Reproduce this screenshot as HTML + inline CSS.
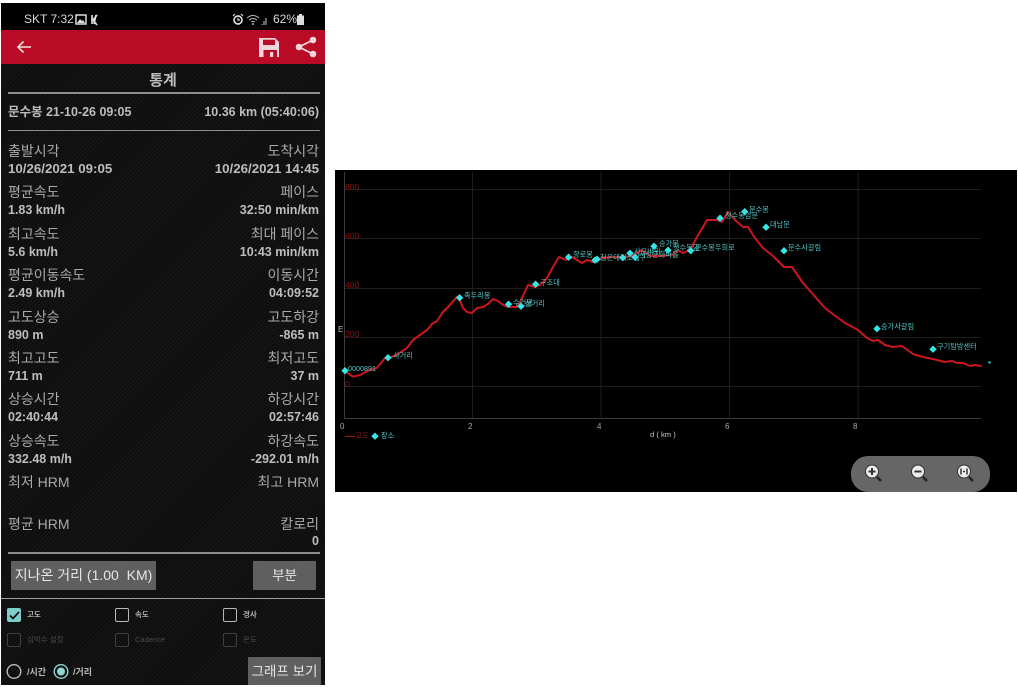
<!DOCTYPE html>
<html lang="ko"><head><meta charset="utf-8"><style>
html,body{margin:0;padding:0;background:#fff;width:1018px;height:687px;overflow:hidden}
body{position:relative;font-family:"Liberation Sans","Noto Sans CJK KR",sans-serif}
div,span{position:absolute;white-space:nowrap}
#phone{left:1px;top:3px;width:324px;height:682px;background:#101010 repeating-linear-gradient(135deg,#171717 0 1px,#0e0e0e 1px 3px);overflow:hidden;filter:blur(.35px)}
.l{left:7px;color:#a9a9a9;font-size:14px;line-height:16px;margin-top:1px}
.r{right:6px;color:#a9a9a9;font-size:14px;line-height:16px;text-align:right;margin-top:1px}
.v{font-weight:bold;font-size:12.5px;color:#bdbdbd;margin-top:0}
.dt{font-size:13.3px}
.hr{left:7px;width:312px;height:1px;background:#8e8e8e}
.btn{background:#5f5f5f;color:#e6e6e6;text-align:center;border-radius:1px}
.cb{width:12px;height:12px;border:1.5px solid #b8b8b8;border-radius:2px}
.cb.d{border-color:#404040}
.t{font-size:7.5px;color:#b0b0b0;font-weight:bold;line-height:10px}
.t.d{color:#4a4a4a;font-weight:normal}
#chart{left:335px;top:170px;width:682px;height:322px;background:#000;overflow:hidden;filter:blur(.35px)}
</style></head><body>
<div id="phone">
<div style="left:0;top:0;width:324px;height:27px;background:#000"></div>
<div style="left:23px;top:9px;color:#d8d8d8;font-size:12px;line-height:15px">SKT 7:32</div>
<svg style="position:absolute;left:74px;top:11px" width="32" height="12" viewBox="0 0 32 12"><rect x="1" y="1" width="10" height="9" fill="none" stroke="#ddd" stroke-width="1.5"/><path d="M2 9l3-4 2 2 1-1 2 3z" fill="#ddd"/><path d="M17 1v9M18 6l4-5M18 6l4 5M21 1l-2 9" stroke="#ddd" stroke-width="1.7" fill="none"/></svg>
<svg style="position:absolute;left:231px;top:10px" width="40" height="14" viewBox="0 0 40 14"><circle cx="6" cy="7" r="4" fill="none" stroke="#ddd" stroke-width="1.7"/><path d="M1 3l2-2M11 3L9 1M6 5v2h2" stroke="#ddd" stroke-width="1.2" fill="none"/><path d="M15 5q6-5 12 0M17 7q4-3 8 0M19 9q2-1.500 4 0" stroke="#bbb" stroke-width="1" fill="none"/><circle cx="21" cy="11" r="1" fill="#bbb"/><path d="M30 11h1v1h-1zM32 8h1v4h-1zM34 5h1v7h-1z" fill="#ccc" transform="translate(-.5 0)"/></svg>
<div style="left:272px;top:9px;color:#d8d8d8;font-size:12px;line-height:15px">62%</div>
<svg style="position:absolute;left:296px;top:11px" width="7" height="11" viewBox="0 0 7 11"><path d="M2 0h3v1.500h2V11H0V1.500h2z" fill="#ddd"/></svg>
<div style="left:0;top:27px;width:324px;height:34px;background:#b90b25"></div>
<svg style="position:absolute;left:15px;top:37px" width="16" height="14" viewBox="0 0 16 14"><path d="M15 7H2M7.500 1.500L2 7l5.500 5.500" stroke="#f4dfe2" stroke-width="1.600" fill="none"/></svg>
<svg style="position:absolute;left:258px;top:35px" width="20" height="19" viewBox="0 0 20 19"><path d="M0 0h16l4 4v15H0z" fill="#f1d5da"/><rect x="4" y="1.700" width="12" height="5.300" fill="#b90b25"/><rect x="4.500" y="12" width="13.500" height="7" fill="#b90b25"/><rect x="11" y="14" width="3.200" height="5" fill="#f1d5da"/></svg>
<svg style="position:absolute;left:294px;top:33px" width="22" height="22" viewBox="0 0 22 22"><path d="M18 4L4 11l14 7" stroke="#f1d5da" stroke-width="1.800" fill="none"/><circle cx="18" cy="4" r="3.300" fill="#f1d5da"/><circle cx="4" cy="11" r="3.300" fill="#f1d5da"/><circle cx="18" cy="18" r="3.300" fill="#f1d5da"/></svg>

<div style="left:0;width:324px;top:69px;text-align:center;color:#bcbcbc;font-size:15px;font-weight:bold;line-height:18px">통계</div>
<div class="hr" style="top:89px;height:1.5px"></div>
<div class="l v" style="top:101px">문수봉 21-10-26 09:05</div>
<div class="r v" style="top:101px">10.36 km (05:40:06)</div>
<div class="hr" style="top:126.500px"></div>

<div class="l" style="top:139px">출발시각</div><div class="r" style="top:139px">도착시각</div>
<div class="l v dt" style="top:158px">10/26/2021 09:05</div><div class="r v dt" style="top:158px">10/26/2021 14:45</div>
<div class="l" style="top:180px">평균속도</div><div class="r" style="top:180px">페이스</div>
<div class="l v" style="top:199px">1.83 km/h</div><div class="r v" style="top:199px">32:50 min/km</div>
<div class="l" style="top:222px">최고속도</div><div class="r" style="top:222px">최대 페이스</div>
<div class="l v" style="top:241px">5.6 km/h</div><div class="r v" style="top:241px">10:43 min/km</div>
<div class="l" style="top:263px">평균이동속도</div><div class="r" style="top:263px">이동시간</div>
<div class="l v" style="top:282px">2.49 km/h</div><div class="r v" style="top:282px">04:09:52</div>
<div class="l" style="top:305px">고도상승</div><div class="r" style="top:305px">고도하강</div>
<div class="l v" style="top:324px">890 m</div><div class="r v" style="top:324px">-865 m</div>
<div class="l" style="top:346px">최고고도</div><div class="r" style="top:346px">최저고도</div>
<div class="l v" style="top:365px">711 m</div><div class="r v" style="top:365px">37 m</div>
<div class="l" style="top:387px">상승시간</div><div class="r" style="top:387px">하강시간</div>
<div class="l v" style="top:406px">02:40:44</div><div class="r v" style="top:406px">02:57:46</div>
<div class="l" style="top:429px">상승속도</div><div class="r" style="top:429px">하강속도</div>
<div class="l v" style="top:448px">332.48 m/h</div><div class="r v" style="top:448px">-292.01 m/h</div>
<div class="l" style="top:470px">최저 HRM</div><div class="r" style="top:470px">최고 HRM</div>
<div class="l" style="top:512px">평균 HRM</div><div class="r" style="top:512px">칼로리</div>
<div class="r v" style="top:530px">0</div>
<div class="hr" style="top:549px;height:1.5px"></div>

<div class="btn" style="left:10px;top:558px;width:145px;height:29px;font-size:14px;line-height:29px">지나온 거리 (1.00&nbsp; KM)</div>
<div class="btn" style="left:252px;top:558px;width:63px;height:29px;font-size:13.5px;line-height:29px">부분</div>
<div style="left:0;top:595px;width:324px;height:1px;background:#a0a0a0"></div>

<div class="cb" style="left:6px;top:605px;background:#7fcfc9;border-color:#7fcfc9"></div>
<svg style="position:absolute;left:6px;top:605px" width="15" height="15" viewBox="0 0 15 15"><path d="M3 7.500l3 3 6-6.500" stroke="#111" stroke-width="1.800" fill="none"/></svg>
<div class="t" style="left:26px;top:607px">고도</div>
<div class="cb" style="left:114px;top:605px"></div><div class="t" style="left:134px;top:607px">속도</div>
<div class="cb" style="left:222px;top:605px"></div><div class="t" style="left:242px;top:607px">경사</div>
<div class="cb d" style="left:6px;top:630px"></div><div class="t d" style="left:26px;top:632px">심박수 설정</div>
<div class="cb d" style="left:114px;top:630px"></div><div class="t d" style="left:134px;top:632px">Cadence</div>
<div class="cb d" style="left:222px;top:630px"></div><div class="t d" style="left:242px;top:632px">온도</div>

<svg style="position:absolute;left:5px;top:660px" width="64" height="17" viewBox="0 0 64 17"><circle cx="8" cy="8.500" r="6.800" fill="none" stroke="#bbb" stroke-width="1.400"/><circle cx="55" cy="8.500" r="6.800" fill="none" stroke="#8fd6d0" stroke-width="1.400"/><circle cx="55" cy="8.500" r="4" fill="#8fd6d0"/></svg>
<div class="t" style="left:26px;top:664px;font-size:9px;color:#b8b8b8">/시간</div>
<div class="t" style="left:72px;top:664px;font-size:9px;color:#b8b8b8">/거리</div>
<div class="btn" style="left:247px;top:654px;width:73px;height:28px;font-size:13.5px;line-height:30px">그래프 보기</div>
</div>

<div id="chart">
<svg width="682" height="322" viewBox="335 170 682 322" style="position:absolute;left:0;top:0" font-family="Liberation Sans,Noto Sans CJK KR,sans-serif">
<g stroke="#1e1e1e" stroke-width="1" fill="none">
<path d="M344 189.500H981M344 238.500H981M344 288.500H981M344 337.500H981M344 386.500H981"/>
<path d="M472.500 172V418M601 172V418M729.500 172V418M858 172V418"/>
</g>
<path d="M344.500 172V418M344 418.500H981" stroke="#3c3c3c" stroke-width="1" fill="none"/>
<g fill="#8a1616" font-size="8.500"><text x="345" y="190">800</text><text x="345" y="239">600</text><text x="345" y="288">400</text><text x="345" y="337">200</text><text x="345" y="387">0</text></g>
<text x="338" y="332" fill="#bbb" font-size="8">E</text>
<g fill="#aaa" font-size="8"><text x="340" y="429">0</text><text x="468" y="429">2</text><text x="597" y="429">4</text><text x="725" y="429">6</text><text x="853" y="429">8</text></g>
<text x="650" y="437" fill="#c8c8c8" font-size="7.600">d ( km )</text>
<path d="M345 371L349 374 353 376.700 360 375 368 370.700 376.700 368 381 363 385 358 395 356 407 348 413 340 420 335 427 330 432 324 437 321 443 312 450 305 455 299 457 297 459 298 463 308 467 312 472 313 477 308 483 307 488 304 493 299 498 301 503 305 508 307 517 307 522 298 528 285 535 287 540 285 547 278 553 267 559 257 566 260 572 257 582 263 587 260 593 262 602 258 612 257 622 257 632 256 642 250 650 256 660 256 672 255 678 250 683 253 690 250 697 237 707 220 718 220 722 222 728 212 735 220 743 227 748 227 755 238 763 248 773 256 784 267 792 267 803 283 825 308 830 312 845 323 858 330 867 338 873 341 878 340 885 345 893 347 902 346 913 354 923 357 933 359 945 362 952 361 957 363 963 363 970 366 975 365 981 366" fill="none" stroke="#cc161e" stroke-width="2" stroke-linejoin="round" stroke-linecap="round"/>
<g fill="#35e6e6">
<path d="M345 367l3.700 3.700-3.700 3.700-3.700-3.700zM388 354l3.700 3.700-3.700 3.700-3.700-3.700zM459.600 294l3.700 3.700-3.700 3.700-3.700-3.700zM508.500 300.500l3.700 3.700-3.700 3.700-3.700-3.700zM521 302.500l3.700 3.700-3.700 3.700-3.700-3.700zM535.600 280.500l3.700 3.700-3.700 3.700-3.700-3.700zM568.600 253.500l3.700 3.700-3.700 3.700-3.700-3.700zM595 256.500l3.700 3.700-3.700 3.700-3.700-3.700zM597 255.500l3.700 3.700-3.700 3.700-3.700-3.700zM622.700 254l3.700 3.700-3.700 3.700-3.700-3.700zM630 249.500l3.700 3.700-3.700 3.700-3.700-3.700zM635 253.500l3.700 3.700-3.700 3.700-3.700-3.700zM654 242.500l3.700 3.700-3.700 3.700-3.700-3.700zM668 246.500l3.700 3.700-3.700 3.700-3.700-3.700zM690.700 247l3.700 3.700-3.700 3.700-3.700-3.700zM720 214.500l3.700 3.700-3.700 3.700-3.700-3.700zM744.700 208l3.700 3.700-3.700 3.700-3.700-3.700zM766 223.500l3.700 3.700-3.700 3.700-3.700-3.700zM784 247l3.700 3.700-3.700 3.700-3.700-3.700zM877 325l3.700 3.700-3.700 3.700-3.700-3.700zM933 345.500l3.700 3.700-3.700 3.700-3.700-3.700zM375 432.500l3.700 3.700-3.700 3.700-3.700-3.700z"/>
<rect x="988.500" y="361.500" width="2" height="2"/>
</g>
<g fill="#4fc4c4" font-size="7.200">
<text x="348" y="371">0000891</text><text x="393" y="358">사거리</text><text x="464" y="298">족두리봉</text><text x="513" y="305">수건봉</text><text x="525" y="306">삼거리</text><text x="540" y="285">구조대</text><text x="573" y="257">향로봉</text><text x="600" y="260">청운대피소입구</text><text x="634" y="254">사모바위</text><text x="639" y="257">사상문화마을</text><text x="659" y="246">승가봉</text><text x="673" y="250">청수동암</text><text x="695" y="250">문수봉우회로</text><text x="725" y="218">청수동암문</text><text x="749" y="212">문수봉</text><text x="770" y="227">대남문</text><text x="788" y="250">문수사갈림</text><text x="881" y="329">승가사갈림</text><text x="937" y="349">구기탐방센터</text><text x="381" y="438">장소</text>
</g>
<path d="M345 436.500h10" stroke="#a01818" stroke-width="1"/>
<text x="355" y="438" fill="#8c1616" font-size="7.500">고도</text>
<rect x="851" y="456" width="139" height="36" rx="17" fill="#666"/>
<g>
<path d="M877 477l4 4M923 477l4 4M969 477l4 4" stroke="#222" stroke-width="2.400"/>
<circle cx="872" cy="471.500" r="6.500" fill="#ececec" stroke="#333" stroke-width="1"/>
<circle cx="918" cy="471.500" r="6.500" fill="#ececec" stroke="#333" stroke-width="1"/>
<circle cx="964" cy="471.500" r="6.500" fill="#ececec" stroke="#333" stroke-width="1"/>
<path d="M868.500 471.500h7M872 468v7M914.500 471.500h7" stroke="#333" stroke-width="2"/>
<path d="M961 468.500v6M967 468.500v6M963 471.500h2" stroke="#333" stroke-width="1.500"/>
</g>
</svg>
</div>
</body></html>
